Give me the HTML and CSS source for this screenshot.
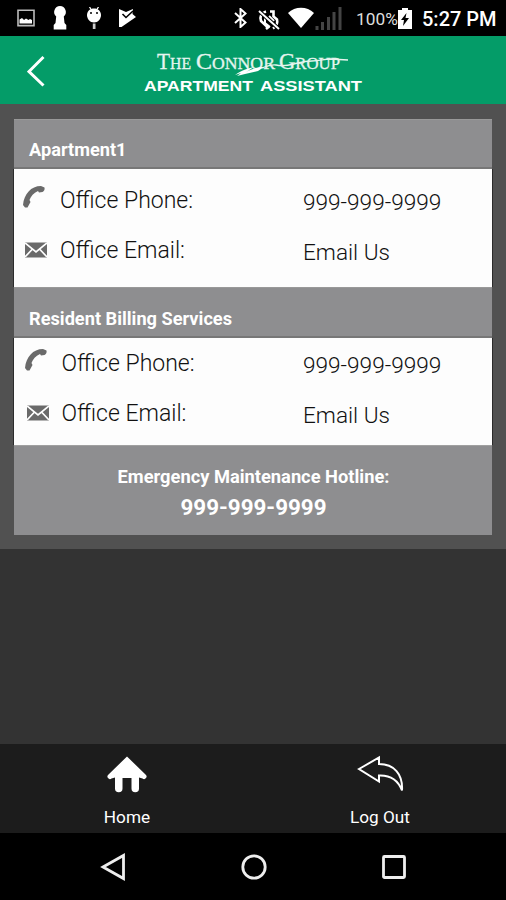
FILE: index.html
```html
<!DOCTYPE html>
<html lang="en">
  <head>
    <meta charset="UTF-8" />
    <meta name="viewport" content="width=device-width, initial-scale=1.0" />
    <title>Apartment Assistant</title>
    <link rel="stylesheet" href="styles.css">
  </head>

  <body>
    <div class="status-bar">
      <div class="status-left">
        <svg width="18" height="18" viewBox="0 0 18 18"><path d="M1 1.2h16v15.4H1z" fill="none" stroke="#bbb" stroke-width="1.6"/><path d="M2.500 14.500v-4l2.500-1.500 2 2 2-1.500 2.500 1.500 1.500-1 2 1v3.500z" fill="#fff"/></svg>
        <svg class="keyhole" width="14" height="24" viewBox="0 0 14 24"><path d="M7 0a6 6 0 0 1 3.800 10.500L11.500 17l1.800 2v4.500H.7V19l1.800-2 .7-6.500A6 6 0 0 1 7 0z" fill="#fff"/></svg>
        <svg class="droid" width="16" height="24" viewBox="0 0 16 24"><path d="M3.500 0l2 3M12.500 0l-2 3" stroke="#fff" stroke-width="1.300"/><path d="M8 1.500c4 0 7 2.700 7 6.500 0 4-3 7.500-7 7.500S1 12 1 8c0-3.800 3-6.500 7-6.500z" fill="#fff"/><path d="M6.800 16.500h2.700V22H6.800z" fill="#ccc"/><circle cx="5" cy="6" r="1" fill="#000"/><circle cx="11" cy="6" r="1" fill="#000"/></svg>
        <svg class="play" width="18" height="20" viewBox="0 0 18 20"><path d="M1 1l7 3 7-3-.5 5 3.500 3L3.500 19H1z" fill="#fff"/><path d="M4.500 6l3.500 3.500L15 3" fill="none" stroke="#000" stroke-width="1.600"/></svg>
      </div>
      <div class="status-right">
        <svg class="bluetooth" width="13" height="20" viewBox="0 0 13 20"><path d="M1 5l10.500 9.500L6.500 19V1l5 4.500L1 15" fill="none" stroke="#fff" stroke-width="2"/></svg>
        <svg class="vibrate" width="22" height="22" viewBox="0 0 22 22"><path d="M8 2.500C3 4 1.500 8 3 12l7 6.500-2 1.500M12 2.500h3.500v5l3.500 3c1 4-1 7-4 9" fill="none" stroke="#fff" stroke-width="2.600"/><path d="M7 8v6l5 4M11 7l5 5" fill="none" stroke="#fff" stroke-width="2"/><path d="M1 2l20 18" stroke="#000" stroke-width="4"/><path d="M1 2l20 18" stroke="#fff" stroke-width="2"/></svg>
        <svg class="wifi" width="26" height="21" viewBox="0 0 26 21"><path d="M0 6C7-1 19-1 26 6L13 21z" fill="#fff"/></svg>
        <svg class="signal" width="27" height="25" viewBox="0 0 27 25"><path d="M2 20v4M7.500 16v8M13.500 11v13M19 6v18M25 1v23" stroke="#444" stroke-width="3"/></svg>
        <span class="percent">100%</span>
        <svg class="battery" width="14" height="21" viewBox="0 0 14 21"><path d="M4 0h6v2h4v19H0V2h4z" fill="#fff"/><path d="M8.500 5L3 12h3l-1 6 6-8H7.500z" fill="#000"/></svg>
        <span class="clock">5:27 PM</span>
      </div>
    </div>

    <div class="header">
      <svg class="back" width="18" height="32" viewBox="0 0 18 32"><path d="M16.500 2L2 16.500l14.500 14" fill="none" stroke="#fff" stroke-width="3"/></svg>
      <svg class="logo" width="222" height="46" viewBox="0 0 222 46">
        <g class="logo-serif">
          <text x="13" y="21" textLength="34" lengthAdjust="spacingAndGlyphs"><tspan class="cap">T</tspan>HE</text>
          <text x="52" y="21" textLength="79" lengthAdjust="spacingAndGlyphs"><tspan class="cap">C</tspan>ONNOR</text>
          <text x="135" y="21" textLength="61" lengthAdjust="spacingAndGlyphs"><tspan class="cap">G</tspan>ROUP</text>
        </g>
        <path d="M91 27c7-5 14-7 19-8l-8 5c8-4 13-5 18-5l-6 4-13 3-8 2 4-3z" fill="#fff"/>
        <path d="M118 20c5-2 10-4 14-3s10 1 18-1 10-3 18-3 12-2 18-2l18 1" fill="none" stroke="#e6f5ef" stroke-width="1.300"/>
        <text class="logo-sub" x="0" y="43" textLength="109" lengthAdjust="spacingAndGlyphs">APARTMENT</text>
        <text class="logo-sub" x="116" y="43" textLength="102" lengthAdjust="spacingAndGlyphs">ASSISTANT</text>
      </svg>
    </div>

    <div class="content">
      <div class="card">
        <div class="section-title">Apartment1</div>
        <div class="section">
          <div class="row">
            <svg class="phone" width="24" height="24" viewBox="0 0 24 24"><path d="M1 20C2 9 9 1 19 1l3.500 1.500c.5 2-.5 4-2 4.500L17 7.500l-1-1.500C11.500 8 9 11 7.500 15l1 2-3 5.500H3z" fill="#6a6a6a"/></svg>
            <span class="label">Office Phone:</span>
            <span class="value">999-999-9999</span>
          </div>
          <div class="row">
            <svg class="mail" width="22" height="16" viewBox="0 0 22 16"><path d="M0 .5h22v15H0z" fill="#6a6a6a"/><path d="M0 1l11 9L22 1M0 15l7.500-8M22 15l-7.500-8" fill="none" stroke="#fff" stroke-width="1.700"/></svg>
            <span class="label">Office Email:</span>
            <span class="value email">Email Us</span>
          </div>
        </div>
        <div class="section-title second">Resident Billing Services</div>
        <div class="section billing">
          <div class="row">
            <svg class="phone" width="24" height="24" viewBox="0 0 24 24"><path d="M1 20C2 9 9 1 19 1l3.500 1.500c.5 2-.5 4-2 4.500L17 7.500l-1-1.500C11.500 8 9 11 7.500 15l1 2-3 5.500H3z" fill="#6a6a6a"/></svg>
            <span class="label">Office Phone:</span>
            <span class="value">999-999-9999</span>
          </div>
          <div class="row">
            <svg class="mail" width="22" height="16" viewBox="0 0 22 16"><path d="M0 .5h22v15H0z" fill="#6a6a6a"/><path d="M0 1l11 9L22 1M0 15l7.500-8M22 15l-7.500-8" fill="none" stroke="#fff" stroke-width="1.700"/></svg>
            <span class="label">Office Email:</span>
            <span class="value email">Email Us</span>
          </div>
        </div>
        <div class="hotline">
          <div class="hotline-title">Emergency Maintenance Hotline:</div>
          <div class="hotline-number">999-999-9999</div>
        </div>
      </div>
    </div>

    <div class="tab-bar">
      <div class="tab">
        <svg width="42" height="38" viewBox="0 0 42 38"><path d="M21 1.500L2.500 19.500a2.500 2.500 0 0 0 3 4L9 22.500V33.500a3.500 3.500 0 0 0 7.500 0V23h9v10.500a3.500 3.500 0 0 0 7.500 0V22.500l3.500 1a2.500 2.500 0 0 0 3-4z" fill="#fff"/></svg>
        <span>Home</span>
      </div>
      <div class="tab">
        <svg width="48" height="38" viewBox="0 0 48 38"><path d="M3 14L23 2.500v6.500C38 9 47 19 46 35.500 42 25 35 20 23 20.500v6z" fill="none" stroke="#fff" stroke-width="2"/></svg>
        <span>Log Out</span>
      </div>
    </div>

    <div class="nav-bar">
      <svg width="26" height="28" viewBox="0 0 26 28"><path d="M3 14L23.500 2.500v23z" fill="none" stroke="#eee" stroke-width="2.800"/></svg>
      <svg width="26" height="28" viewBox="0 0 26 28"><circle cx="13" cy="14" r="11.200" fill="none" stroke="#eee" stroke-width="2.800"/></svg>
      <svg width="26" height="28" viewBox="0 0 26 28"><rect x="2.500" y="3.500" width="21" height="21" rx="1" fill="none" stroke="#eee" stroke-width="2.800"/></svg>
    </div>
  </body>
</html>
```
FILE: styles.css
```css
* {
  box-sizing: border-box;
}

body {
  display: flex;
  flex-direction: column;
  height: 900px;
  margin: 0;
  background-color: #333333;
  font-family: Roboto, sans-serif;
  color: #ffffff;
}

svg {
  display: block;
  flex-shrink: 0;
}

/* Status bar */
.status-bar {
  display: flex;
  justify-content: space-between;
  height: 36px;
  padding: 0 11px 0 17px;
  background-color: #000000;
}

.status-left,
.status-right {
  display: flex;
  align-items: center;
}

.keyhole {
  margin-left: 18px;
}

.droid {
  margin: 2px 0 0 19px;
}

.play {
  margin-left: 16px;
}

.bluetooth {
  margin-right: 3px;
}

.vibrate {
  margin: 3px 0 0 8px;
}

.wifi {
  margin-left: 8px;
  margin-bottom: 2px;
}

.signal {
  margin-left: 1px;
}

.percent {
  width: 41px;
  margin: 2px -1px 0 14px;
  font-size: 17.3px;
  color: #dddddd;
}

.battery {
  margin-left: 2px;
}

.clock {
  width: 73px;
  margin: 2px 0 0 10px;
  font-size: 20px;
  font-weight: 500;
  white-space: nowrap;
}

/* Green header */
.header {
  display: flex;
  align-items: center;
  height: 68px;
  padding: 2px 0 0 27px;
  background-color: #049c68;
}

.logo {
  margin-left: 99px;
}

.logo-serif {
  font-family: "Liberation Serif", serif;
  font-size: 17px;
  fill: #e6f5ef;
  stroke: #e6f5ef;
  stroke-width: 0.3px;
}

.cap {
  font-size: 23px;
}

.logo-sub {
  font-family: "Liberation Sans", sans-serif;
  font-size: 14px;
  font-weight: bold;
  fill: #ffffff;
}

/* Contact card */
.content {
  height: 445px;
  padding: 15px 14px 14px;
  background-color: #515151;
}

.section-title {
  height: 50px;
  padding: 18px 0 0 15px;
  border-top: 1px solid #999999;
  border-bottom: 2px solid #777777;
  background-color: #8e8e90;
  font-size: 18.2px;
  font-weight: bold;
  line-height: 24px;
}

.section-title.second {
  height: 51px;
  padding-top: 19px;
}

.section {
  height: 118px;
  padding: 6px 0 0 8px;
  background-color: #fdfdfd;
  box-shadow: -1px 0 #2b2b2b, 1px 0 #2b2b2b;
  color: #111111;
  font-size: 22.6px;
  font-weight: 300;
}

.section.billing {
  height: 107px;
  padding-top: 0;
}

.row {
  display: flex;
  align-items: center;
  height: 50px;
}

.phone {
  margin-bottom: 6px;
}

.mail {
  margin: 0 1px 0 3px;
}

.label {
  width: 257px;
  padding-left: 14px;
  font-size: 23px;
}

.mail + .label {
  width: 255px;
  padding-left: 12px;
}

.value {
  padding-top: 4px;
}

.billing .phone,
.billing .mail {
  position: relative;
  left: 2px;
}

.billing .label {
  padding-left: 15.5px;
}

.billing .mail + .label {
  padding-left: 13.5px;
}

.hotline {
  height: 90px;
  padding: 18px 0 0 1px;
  border-top: 1px solid #a0a0a0;
  background-color: #8e8e90;
  font-weight: bold;
  text-align: center;
}

.hotline-title {
  font-size: 18.3px;
  line-height: 26px;
}

.hotline-number {
  font-size: 22.4px;
  line-height: 35px;
}

/* Bottom tabs */
.tab-bar {
  display: flex;
  height: 89px;
  margin-top: auto;
  background-color: #1c1c1c;
}

.tab {
  display: flex;
  flex: 1;
  flex-direction: column;
  align-items: center;
  padding: 11px 0 0 1px;
  font-size: 17.2px;
  line-height: 24px;
}

.tab span {
  margin-top: 12px;
}

/* Android navigation */
.nav-bar {
  display: flex;
  justify-content: space-between;
  height: 67px;
  padding: 20px 99px 0 100px;
  background-color: #000000;
}
```
